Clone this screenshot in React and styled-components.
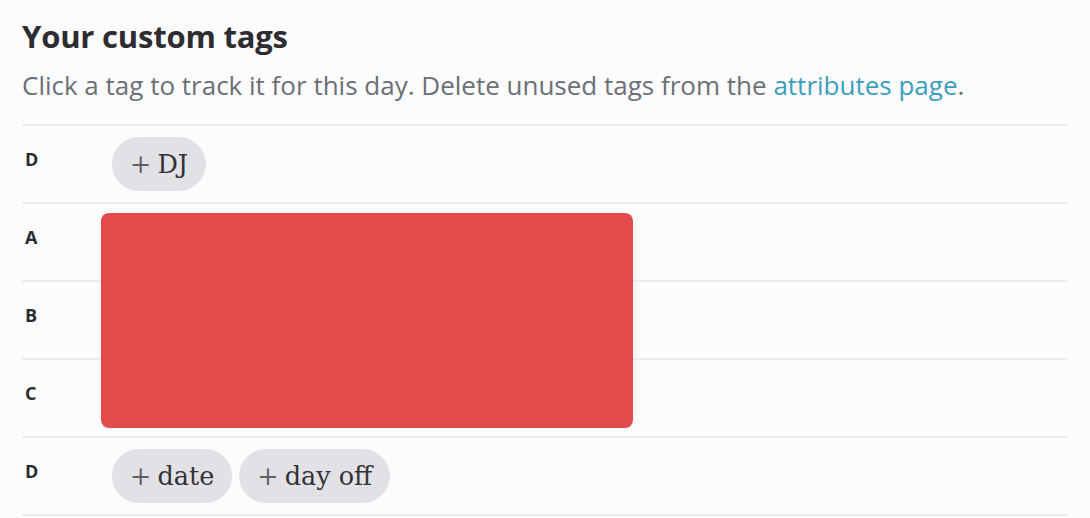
import styled, { createGlobalStyle } from "styled-components";

const GlobalStyle = createGlobalStyle`
  html, body {
    margin: 0;
    padding: 0;
    background: #fcfcfd;
  }
  body {
    font-family: "Open Sans", "Liberation Sans", sans-serif;
    color: #2f2f33;
  }
`;

const Card = styled.section`
  padding: 17px 23px 0 22px;
`;

const Title = styled.h2`
  margin: 0;
  font-size: 31px;
  line-height: 38px;
  font-weight: 700;
  color: #2d2d31;
  letter-spacing: -0.2px;
`;

const Subtitle = styled.p`
  margin: 13px 0 22px;
  font-size: 26px;
  line-height: 34px;
  color: #6b6f76;
`;

const Link = styled.a`
  color: #3d9dbd;
  text-decoration: none;
`;

const TagList = styled.div`
  position: relative;
  border-bottom: 2px solid #ececf1;
`;

const Row = styled.div`
  display: flex;
  height: 76px;
  border-top: 2px solid #ececf1;
`;

const Letter = styled.div`
  width: 87px;
  padding: 24px 0 0 3px;
  font-size: 18px;
  line-height: 18px;
  font-weight: 700;
  color: #2b2b2f;
`;

const Tags = styled.div`
  display: flex;
  gap: 7px;
  padding-top: 11px;
`;

const Tag = styled.button`
  height: 54px;
  padding: 0 18px;
  border: none;
  border-radius: 27px;
  background: #e1e1e6;
  font-family: "DejaVu Serif", "Liberation Serif", serif;
  font-size: 25.5px;
  color: #333337;
  cursor: pointer;
`;

const Plus = styled.span`
  color: #5f5f64;
  font-weight: 300;
  margin-right: 6px;
`;

const Redaction = styled.div`
  position: absolute;
  left: 79px;
  top: 89px;
  width: 532px;
  height: 215px;
  border-radius: 8px;
  background: #e34a4c;
`;

const rows = [
  { letter: "D", tags: ["DJ"] },
  { letter: "A", tags: [] },
  { letter: "B", tags: [] },
  { letter: "C", tags: [] },
  { letter: "D", tags: ["date", "day off"] },
];

export default function App() {
  return (
    <>
      <GlobalStyle />
      <Card>
        <Title>Your custom tags</Title>
        <Subtitle>
          Click a tag to track it for this day. Delete unused tags from the{" "}
          <Link href="#">attributes page</Link>.
        </Subtitle>
        <TagList>
          {rows.map((row, i) => (
            <Row key={i}>
              <Letter>{row.letter}</Letter>
              <Tags>
                {row.tags.map((t) => (
                  <Tag key={t}>
                    <Plus>+</Plus>
                    {t}
                  </Tag>
                ))}
              </Tags>
            </Row>
          ))}
          <Redaction />
        </TagList>
      </Card>
    </>
  );
}
